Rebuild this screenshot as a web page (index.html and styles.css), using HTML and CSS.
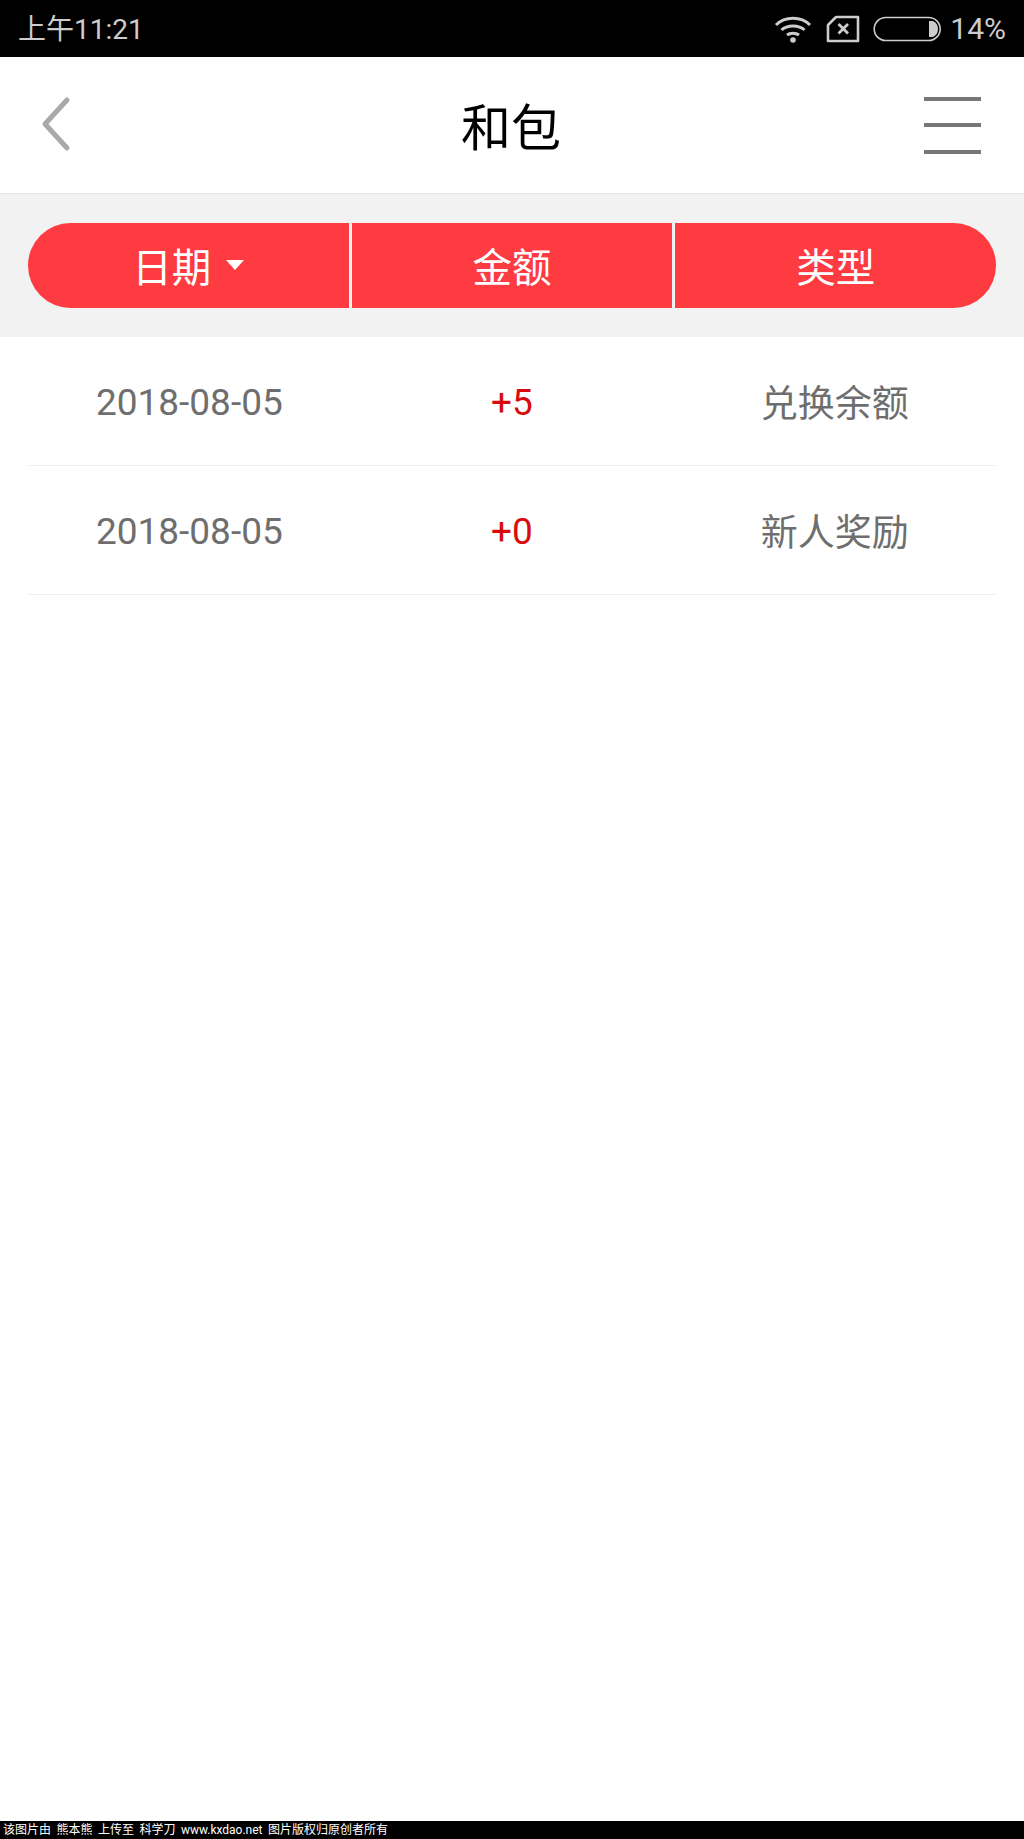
FILE: index.html
```html
<!DOCTYPE html>
<html lang="zh-CN">
<head>
    <meta charset="UTF-8">
    <meta name="viewport" content="width=device-width, initial-scale=1.0">
    <title>和包</title>
    <link rel="stylesheet" href="styles.css">
</head>
<body>

<div class="page">
    <div class="status-bar">
        <span class="status-time">上午11:21</span>
        <div class="status-right">
            <svg class="icon-wifi" width="38" height="28" viewBox="0 0 38 28">
                <path d="M2 10 C11 1 27 1 36 10" fill="none" stroke="#ccc" stroke-width="3"/>
                <path d="M7.5 15 C13 9.5 25 9.5 30.5 15" fill="none" stroke="#ccc" stroke-width="3"/>
                <path d="M13 20 C16 17.5 22 17.5 25 20" fill="none" stroke="#ccc" stroke-width="3"/>
                <circle cx="19" cy="25" r="2.8" fill="#ccc"/>
            </svg>
            <svg class="icon-sim" width="34" height="28" viewBox="0 0 34 28">
                <path d="M10 2 H32 V26 H2 V10 Z" fill="none" stroke="#ccc" stroke-width="2.6" stroke-linejoin="round"/>
                <path d="M12.5 9 L22 18.5 M22 9 L12.5 18.5" fill="none" stroke="#ccc" stroke-width="2.8"/>
            </svg>
            <svg class="icon-battery" width="70" height="26" viewBox="0 0 70 26">
                <rect x="1.2" y="1.5" width="66" height="23" rx="11.5" fill="none" stroke="#ccc" stroke-width="1.6"/>
                <path d="M56 5 H60 C63.5 6.5 65 9.5 65 13 C65 16.5 63.5 19.5 60 21 H56 Z" fill="#ccc"/>
            </svg>
            <span class="status-battery">14%</span>
        </div>
    </div>

    <header class="nav-bar">
        <svg class="icon-back" width="32" height="56" viewBox="0 0 32 56">
            <path d="M27 4 L5 28 L27 52" fill="none" stroke="#a9a9a9" stroke-width="5" stroke-linecap="round" stroke-linejoin="round"/>
        </svg>
        <h1 class="nav-title">和包</h1>
        <div class="icon-menu">
            <span></span>
            <span></span>
            <span></span>
        </div>
    </header>

    <section class="filter-band">
        <div class="filter-pill">
            <div class="filter-item">日期<i class="caret"></i></div>
            <div class="filter-item">金额</div>
            <div class="filter-item">类型</div>
        </div>
    </section>

    <main class="record-list">
        <div class="record-row">
            <div class="record-cell num">2018-08-05</div>
            <div class="record-cell num amount">+5</div>
            <div class="record-cell">兑换余额</div>
        </div>
        <div class="record-row">
            <div class="record-cell num">2018-08-05</div>
            <div class="record-cell num amount">+0</div>
            <div class="record-cell">新人奖励</div>
        </div>
    </main>

    <footer class="watermark">该图片由 熊本熊 上传至 科学刀 www.kxdao.net 图片版权归原创者所有</footer>
</div>

</body>
</html>
```

FILE: styles.css
```css
* {
    box-sizing: border-box;
}
body {
    font-family: Roboto, "Noto Sans CJK SC", sans-serif;
    margin: 0;
    padding: 0;
    background: #fff;
}
.page {
    display: flex;
    flex-direction: column;
    height: 1839px;
}

/* Status bar */
.status-bar {
    height: 57px;
    background: #000;
    color: #ccc;
    display: flex;
    align-items: center;
    justify-content: space-between;
    padding: 0 18px;
    font-size: 30px;
}
.status-time {
    font-size: 28px;
    margin-top: -4px;
}
.status-right {
    display: flex;
    align-items: center;
}
.icon-wifi {
    margin-right: 14px;
}
.icon-sim {
    margin-right: 13px;
}
.icon-battery {
    margin-right: 7px;
}

/* Nav */
.nav-bar {
    height: 137px;
    display: grid;
    grid-template-columns: 1fr auto 1fr;
    align-items: center;
    padding: 0 43px 0 40px;
    border-bottom: 1px solid #e6e6e6;
}
.icon-back {
    margin-top: -3px;
}
.nav-title {
    margin: -2px 0 0 1px;
    font-size: 50px;
    font-weight: 400;
    color: #000;
}
.icon-menu {
    width: 57px;
    justify-self: end;
    display: flex;
    flex-direction: column;
    gap: 22.5px;
}
.icon-menu span {
    display: block;
    height: 4px;
    background: #777;
}

/* Filter */
.filter-band {
    height: 143px;
    background: #f2f2f2;
    padding: 29px 28px;
}
.filter-pill {
    height: 85px;
    display: flex;
    background: #fd3b40;
    border-radius: 43px;
    overflow: hidden;
}
.filter-item {
    flex: 1;
    display: flex;
    align-items: center;
    justify-content: center;
    padding-bottom: 3px;
    color: #fff;
    font-size: 39.5px;
    border-left: 3px solid #f2f2f2;
}
.filter-item:first-child {
    border-left: 0;
}
.caret {
    width: 0;
    height: 0;
    margin: 2px 0 0 15px;
    border-left: 9px solid transparent;
    border-right: 9px solid transparent;
    border-top: 10px solid #fff;
}

/* Rows */
.record-list {
    flex: 1;
    padding: 0 28px;
}
.record-row {
    height: 129px;
    display: flex;
    align-items: center;
    border-bottom: 1px solid #efefef;
}
.record-cell {
    flex: 1;
    text-align: center;
    font-size: 37px;
    color: #6e6e6e;
}
.record-cell.num {
    padding-top: 2px;
}
.record-cell.amount {
    color: #d80c0c;
}

.watermark {
    height: 18px;
    background: #000;
    color: #fff;
    font-size: 12px;
    line-height: 18px;
    padding-left: 3px;
    word-spacing: 2.5px;
    white-space: pre;
}
```
